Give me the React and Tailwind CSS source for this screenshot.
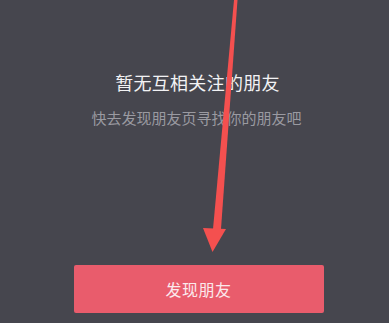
export default function App() {
  return (
    <div
      className="relative w-[389px] h-[323px] overflow-hidden bg-[#46464e] flex flex-col items-center pt-[70px]"
      style={{ fontFamily: '"Noto Sans CJK SC", "Noto Sans", sans-serif' }}
    >
      <h2 className="ml-[6px] h-[24px] leading-[24px] text-[18px] text-[#f2f2f4] font-normal tracking-[0.3px]">
        暂无互相关注的朋友
      </h2>
      <p className="ml-[4px] mt-[14px] h-[20px] leading-[20px] text-[15px] text-[#9a9aa1]">
        快去发现朋友页寻找你的朋友吧
      </p>
      <button className="mt-[137px] w-[250px] h-[48px] ml-[8px] rounded-[2px] bg-[#e95c6c] text-[16px] text-[#fbe9ec] font-normal tracking-[0.5px]">
        发现朋友
      </button>

      {/* annotation arrow */}
      <svg className="absolute left-0 top-0" width="389" height="323" viewBox="0 0 389 323">
        <polygon points="234,0 237.5,0 221,229 213,229" fill="#f4504f" />
        <polygon points="203,228 226,229 212.5,252" fill="#f4504f" />
      </svg>
    </div>
  );
}
